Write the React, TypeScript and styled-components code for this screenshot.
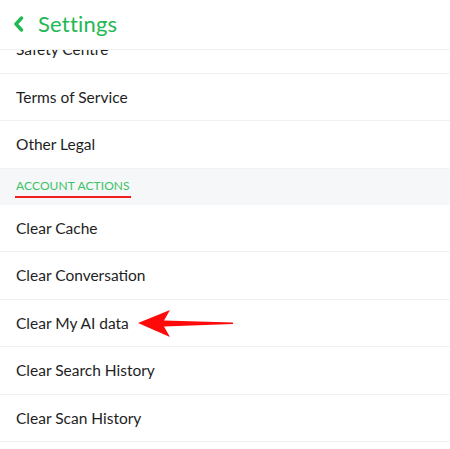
import React, { useLayoutEffect, useRef } from 'react';
import styled, { createGlobalStyle } from 'styled-components';

const GlobalStyle = createGlobalStyle`
  html, body {
    margin: 0;
    padding: 0;
    background: #ffffff;
  }
  * {
    box-sizing: border-box;
  }
`;

const Screen = styled.div`
  height: 100vh;
  display: flex;
  flex-direction: column;
  background: #ffffff;
  font-family: Lato, 'Noto Sans', sans-serif;
  color: #1e1e1e;
`;

const Header = styled.div`
  height: 50px;
  flex-shrink: 0;
  display: flex;
  align-items: center;
  gap: 14px;
  padding: 0 0 2px 13px;
  border-bottom: 1px solid #f1f2f3;
`;

const BackIcon = styled.svg`
  width: 11px;
  height: 16px;
`;

const Title = styled.h1`
  margin: 0;
  font-size: 22px;
  font-weight: 400;
  color: #22b853;
  letter-spacing: 0.2px;
`;

const List = styled.div`
  flex: 1;
  overflow-y: auto;
  padding-bottom: 60px;
  scrollbar-width: none;
  &::-webkit-scrollbar {
    display: none;
  }
`;

const Row = styled.div`
  position: relative;
  height: 47.5px;
  display: flex;
  align-items: center;
  padding: 0 16px;
  font-size: 15.5px;
  border-bottom: 1px solid #f0f1f3;
`;

const SectionHeader = styled.div`
  height: 36px;
  display: flex;
  align-items: center;
  padding: 3px 16px 0;
  background: #f6f7f9;
`;

const SectionLabel = styled.span`
  font-size: 12px;
  color: #3cc266;
  letter-spacing: 0.1px;
  padding: 0 1px 3px;
  margin-left: -1px;
  border-bottom: 2.5px solid #f01e1e;
`;

const Arrow = styled.svg`
  position: absolute;
  left: 137px;
  top: 9px;
  width: 98px;
  height: 30px;
`;

const legalItems = ['Safety Centre', 'Terms of Service', 'Other Legal'];
const accountItems = [
  'Clear Cache',
  'Clear Conversation',
  'Clear My AI data',
  'Clear Search History',
  'Clear Scan History',
];

const App: React.FC = () => {
  const listRef = useRef<HTMLDivElement>(null);

  // the list is shown scrolled a little, Safety Centre half under the header
  useLayoutEffect(() => {
    if (listRef.current) listRef.current.scrollTop = 24;
  }, []);

  return (
    <Screen>
      <GlobalStyle />
      <Header>
        <BackIcon viewBox="0 0 11 16">
          <path d="M8.5 2 L3 8 L8.5 14" fill="none" stroke="#22b853" strokeWidth="3.4" strokeLinecap="round" strokeLinejoin="round" />
        </BackIcon>
        <Title>Settings</Title>
      </Header>
      <List ref={listRef}>
        {legalItems.map((item) => (
          <Row key={item}>{item}</Row>
        ))}
        <SectionHeader>
          <SectionLabel>ACCOUNT ACTIONS</SectionLabel>
        </SectionHeader>
        {accountItems.map((item) => (
          <Row key={item}>
            {item}
            {item === 'Clear My AI data' && (
              <Arrow viewBox="0 0 98 30">
                <polygon points="1,14 33,1 27,11.5 96,13.5 96,15 27,17.5 33,28" fill="#ff0a0a" />
              </Arrow>
            )}
          </Row>
        ))}
      </List>
    </Screen>
  );
};

export default App;
